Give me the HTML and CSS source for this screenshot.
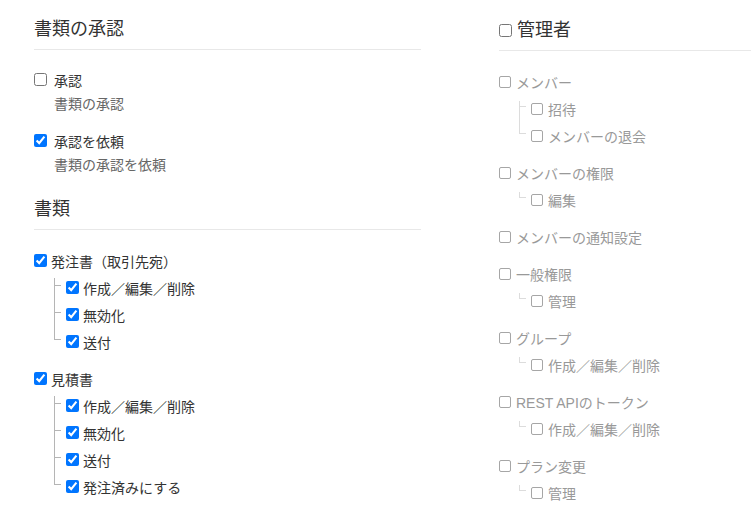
FILE: index.html
```html
<!doctype html>
<html lang="ja">
  <head>
    <meta charset="utf-8">
    <meta name="viewport" content="width=device-width,initial-scale=1">
    <title>権限設定</title>
    <link rel="stylesheet" href="styles.css">
  </head>
  <body>
    <main class="settings">
      <section class="column">
        <h2 class="section-title">書類の承認</h2>
        <ul class="option-list">
          <li class="option">
            <label class="option-label"><input type="checkbox">承認</label>
            <p class="option-desc">書類の承認</p>
          </li>
          <li class="option">
            <label class="option-label"><input type="checkbox" checked>承認を依頼</label>
            <p class="option-desc">書類の承認を依頼</p>
          </li>
        </ul>

        <h2 class="section-title spaced">書類</h2>
        <ul class="perm-list">
          <li class="perm-group">
            <label class="perm"><input type="checkbox" checked>発注書（取引先宛）</label>
            <ul class="perm-children">
              <li><label class="perm"><input type="checkbox" checked>作成／編集／削除</label></li>
              <li><label class="perm"><input type="checkbox" checked>無効化</label></li>
              <li><label class="perm"><input type="checkbox" checked>送付</label></li>
            </ul>
          </li>
          <li class="perm-group">
            <label class="perm"><input type="checkbox" checked>見積書</label>
            <ul class="perm-children">
              <li><label class="perm"><input type="checkbox" checked>作成／編集／削除</label></li>
              <li><label class="perm"><input type="checkbox" checked>無効化</label></li>
              <li><label class="perm"><input type="checkbox" checked>送付</label></li>
              <li><label class="perm"><input type="checkbox" checked>発注済みにする</label></li>
            </ul>
          </li>
        </ul>
      </section>

      <section class="column column-admin">
        <h2 class="section-title"><label class="title-check"><input type="checkbox">管理者</label></h2>
        <ul class="perm-list disabled">
          <li class="perm-group">
            <label class="perm"><input type="checkbox" disabled>メンバー</label>
            <ul class="perm-children">
              <li><label class="perm"><input type="checkbox" disabled>招待</label></li>
              <li><label class="perm"><input type="checkbox" disabled>メンバーの退会</label></li>
            </ul>
          </li>
          <li class="perm-group">
            <label class="perm"><input type="checkbox" disabled>メンバーの権限</label>
            <ul class="perm-children">
              <li><label class="perm"><input type="checkbox" disabled>編集</label></li>
            </ul>
          </li>
          <li class="perm-group">
            <label class="perm"><input type="checkbox" disabled>メンバーの通知設定</label>
          </li>
          <li class="perm-group">
            <label class="perm"><input type="checkbox" disabled>一般権限</label>
            <ul class="perm-children">
              <li><label class="perm"><input type="checkbox" disabled>管理</label></li>
            </ul>
          </li>
          <li class="perm-group">
            <label class="perm"><input type="checkbox" disabled>グループ</label>
            <ul class="perm-children">
              <li><label class="perm"><input type="checkbox" disabled>作成／編集／削除</label></li>
            </ul>
          </li>
          <li class="perm-group">
            <label class="perm"><input type="checkbox" disabled>REST APIのトークン</label>
            <ul class="perm-children">
              <li><label class="perm"><input type="checkbox" disabled>作成／編集／削除</label></li>
            </ul>
          </li>
          <li class="perm-group">
            <label class="perm"><input type="checkbox" disabled>プラン変更</label>
            <ul class="perm-children">
              <li><label class="perm"><input type="checkbox" disabled>管理</label></li>
            </ul>
          </li>
        </ul>
      </section>
    </main>
  </body>
</html>
```

FILE: styles.css
```css
html, body { margin: 0; padding: 0; overflow: hidden; background: #fff; }
body { font-family: "Liberation Sans", "Noto Sans CJK JP", sans-serif; font-size: 14px; color: #333; }

.settings { display: grid; grid-template-columns: 387px minmax(0, 1fr); column-gap: 78px; padding: 16px 0 0 34px; }
.column-admin { padding-top: 1px; min-width: 0; }

input[type=checkbox] { margin: 0; width: 13px; height: 13px; flex: none; }
input[type=checkbox]:disabled { appearance: none; -webkit-appearance: none; box-sizing: border-box; width: 12px; height: 12px; border: 1px solid #a6a6a6; border-radius: 2px; background: #fff; }

.section-title { margin: 0; font-size: 18px; font-weight: normal; line-height: 26px; padding-bottom: 7px; border-bottom: 1px solid #e8e8e8; color: #333; }
.section-title.spaced { margin-top: 20px; }
.title-check { display: flex; align-items: center; gap: 5px; }

ul { list-style: none; margin: 0; padding: 0; }

/* approval options */
.option-list { margin-top: 16px; }
.option + .option { margin-top: 12px; }
.option-label { display: flex; align-items: center; gap: 7px; height: 27px; }
.option-desc { margin: 0; padding-left: 20px; line-height: 22px; color: #666; }

/* permission tree */
.perm-list { margin-top: 17px; }
.perm-group + .perm-group { margin-top: 10px; }
.perm { display: flex; align-items: center; gap: 4px; height: 27px; white-space: nowrap; }
.perm-children { padding-left: 32px; }
.perm-children > li { position: relative; }
.perm-children > li::before { content: ""; position: absolute; left: -12px; top: 0; width: 6px; height: 11px; border-left: 1px solid #b5b5b5; border-bottom: 1px solid #b5b5b5; }
.perm-children > li:first-child::before { top: 4px; height: 7px; }
.perm-children > li:not(:last-child)::after { content: ""; position: absolute; left: -12px; top: 12px; bottom: 0; border-left: 1px solid #b5b5b5; }

.disabled .perm { color: #999; gap: 5px; }
.disabled .perm-children > li::before,
.disabled .perm-children > li::after { border-color: #dcdcdc; }
.disabled .perm-children > li:first-child::before { top: 6px; height: 5px; }
```
